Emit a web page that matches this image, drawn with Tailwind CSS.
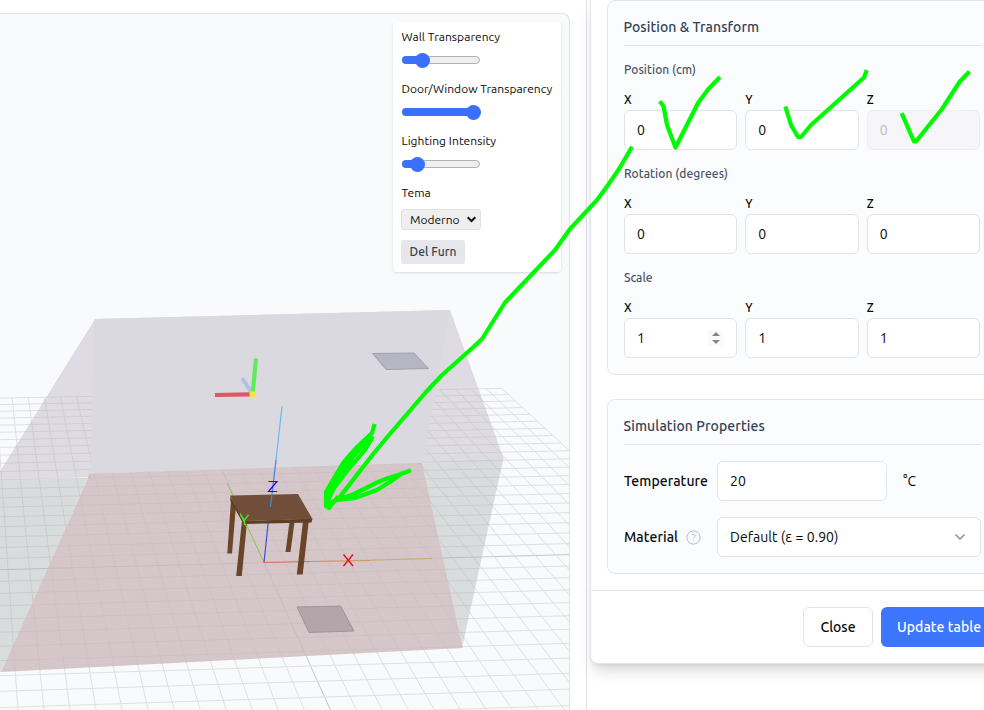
<!DOCTYPE html>
<html lang="en">
<head>
<meta charset="utf-8">
<title>Room editor</title>
<script src="https://cdn.jsdelivr.net/npm/@tailwindcss/browser@4"></script>
</head>
<body class="bg-white overflow-hidden font-[Ubuntu,'Noto_Sans','Open_Sans',sans-serif] text-sm text-[#0a0a0a]">
<div class="relative flex w-[984px] h-[710px] overflow-hidden">

  <!-- 3D viewer -->
  <section class="w-[570px] shrink-0 pt-[13px] h-full">
    <div class="relative h-[697px] bg-[#f9fafc] border-t border-r border-[#e2e3e6] rounded-tr-lg overflow-hidden flex justify-end items-start pt-2 pr-2">
      <svg class="absolute left-0 top-[-14px]" width="569" height="710" viewBox="0 0 569 710">
        <g id="grid" fill="none" stroke="#dfe0e1" stroke-width="1"></g>
        <polygon points="95,319 450,310 503.500,458 422,463.500 90,473 90,477 -6,481" fill="#bcb5c6" fill-opacity=".45"/>
        <polygon points="-6,481 90,478 90,473 2,672 0,672" fill="#aeb2b0" fill-opacity=".42"/>
        <polygon points="422,463.500 503.500,458 462,648" fill="#aeb2b0" fill-opacity=".42"/>
        <polygon points="94.500,319 450,310 436,388 422,463.500 90,473.500 92,396" fill="#dad9e0"/>
        <polygon points="90,473.500 422,463 462.500,648 1.500,672" fill="#cbb9ba" fill-opacity=".78"/>
        <!-- ceiling and floor openings -->
        <polygon points="372.500,353.500 414,353 428.500,368.500 386,369.500" fill="#b4b7c2" stroke="#9da2af"/>
        <polygon points="297,607 340.500,606 354,631 309,632.500" fill="#b3a5aa" stroke="#9d959e"/>
        <!-- view gizmo -->
        <path d="M252 393L243 379.500" stroke="#b4c0e3" stroke-width="4" stroke-linecap="round"/>
        <path d="M215 395L250 394.300" stroke="#e3555f" stroke-width="4.200"/>
        <path d="M252.800 392L256 358.500" stroke="#5fec5c" stroke-width="4.200"/>
        <rect x="249.500" y="391.500" width="6" height="5.500" rx="1" fill="#eeea3c"/>
        <!-- axes behind the table -->
        <path d="M227.500 484L264 562.500" stroke="#8bc94a"/>
        <path d="M264 562.500L269 515" stroke="#4448e8" stroke-width="1.200"/>
        <path d="M264 562.500L310 561.500" stroke="#dc7050"/>
        <path d="M310 561.500L370 560.500" stroke="#d39552"/>
        <path d="M370 560.300L432 558.500" stroke="#cfae64"/>
        <!-- table -->
        <g fill="#6a4528">
          <polygon points="231,500 235.800,508 232,553.500 227.300,553.500"/>
          <polygon points="289.500,522 294.500,522 290.500,552 285.500,552"/>
          <polygon points="241.800,522 247,522 241.800,576 236.200,576"/>
          <polygon points="303,521 308.800,521 302.700,574.500 296.800,574.500"/>
          <polygon points="230,496 245,521 312.500,518.500 311.500,522.500 243.500,524 230.500,501" fill="#5f3e24"/>
        </g>
        <polygon points="230,495.500 298,494 312.500,519 243.500,521" fill="#704e3a"/>
        <path d="M240 513L247 528" stroke="#8bc94a"/>
        <path d="M282 406.500L276 460" stroke="#5fbdea" stroke-width="1.200"/>
        <path d="M276 460L270.500 507" stroke="#3c86de" stroke-width="1.200"/>
        <!-- stroked axis markers -->
        <path d="M268.500 481.500H277L268.500 491.500H277" fill="none" stroke="#3000e0" stroke-width="1.200"/>
        <path d="M240.500 515L244.500 520L248.500 515M244.500 520V525" fill="none" stroke="#3af01a" stroke-width="1.300"/>
        <path d="M343.500 554.500L353 566M353 554.500L343.500 566" stroke="#f5051c" stroke-width="1.300"/>
      </svg>

      <div class="relative w-[168px] h-[250px] bg-white rounded shadow-sm pl-[8.500px] pt-2 text-xs flex flex-col items-start">
        <label class="-mt-px h-4 leading-4 whitespace-nowrap tracking-[0.05px]">Wall Transparency</label>
        <div class="relative mt-[11px] w-[78px] h-2 rounded-full bg-[#efefef] border border-[#b2b2b2]"><i class="absolute -left-px -top-px h-2 w-5 rounded-l-full bg-[#3b73f6]"></i><i class="absolute left-3 -top-[4.500px] size-[15px] rounded-full bg-[#3b6fff]"></i></div>
        <label class="mt-[17px] h-4 leading-4 whitespace-nowrap tracking-[0.02px]">Door/Window Transparency</label>
        <div class="relative mt-[11px] w-[78px] h-2 rounded-full bg-[#3b6fff]"><i class="absolute left-16 -top-[3.500px] size-[15px] rounded-full bg-[#3b6fff]"></i></div>
        <label class="mt-[17px] h-4 leading-4 whitespace-nowrap tracking-[0.05px]">Lighting Intensity</label>
        <div class="relative mt-[11px] w-[78px] h-2 rounded-full bg-[#efefef] border border-[#b2b2b2]"><i class="absolute -left-px -top-px h-2 w-4 rounded-l-full bg-[#3b73f6]"></i><i class="absolute left-[7px] -top-[4.500px] size-[15px] rounded-full bg-[#3b6fff]"></i></div>
        <label class="mt-[17px] h-4 leading-4">Tema</label>
        <div class="mt-2 -ml-[0.500px] w-20 h-[21px] rounded-[3px] bg-[#efefef] border border-[#e0e1e4] flex items-center justify-between pl-2 pr-1"><span>Moderno</span><svg width="9" height="7" viewBox="0 0 9 7" fill="none" stroke="#111" stroke-width="2"><path d="M.7 1.200L4.500 5L8.300 1.200"/></svg></div>
        <button class="mt-[10px] -ml-[0.500px] h-6 w-16 rounded-[3px] bg-[#e5e7eb] text-[#364153] font-medium whitespace-nowrap tracking-[0.05px]">Del Furn</button>
      </div>
    </div>
  </section>

  <!-- Properties dialog -->
  <section class="ml-4 w-[500px] shrink-0 border-l border-[#e2e3e6] pl-[3px] h-full">
    <div class="h-[664px] w-[424px] bg-white border border-t-0 border-[#e2e4e8] rounded-b-lg shadow-[0_10px_15px_-3px_rgba(0,0,0,0.14),0_4px_6px_-4px_rgba(0,0,0,0.12)]">
      <div class="pl-4">
        <div class="h-[375px] w-[391px] rounded-lg border border-[#e5e5e5] bg-[#fbfcfe] px-4">
          <h2 class="-ml-[0.500px] h-[45px] w-[357px] pt-4 leading-5 border-b border-[#e5e5e5] text-[#364153] font-medium tracking-[0.07px]">Position &amp; Transform</h2>
          <h3 class="mt-4 h-4 leading-4 text-xs font-medium text-[#4a5565] tracking-[0.05px]">Position (cm)</h3>
          <div class="mt-[14px] w-[356px] grid grid-cols-3 gap-2 text-xs font-medium">
            <label>X<span class="mt-0.5 h-10 flex items-center border border-[#e3e3e3] rounded-md bg-white px-3 text-sm font-normal">0</span></label>
            <label>Y<span class="mt-0.5 h-10 flex items-center border border-[#e3e3e3] rounded-md bg-white px-3 text-sm font-normal">0</span></label>
            <label>Z<span class="mt-0.5 h-10 flex items-center border border-[#efeff0] rounded-md bg-[#f6f6f8] px-3 text-sm font-normal text-[#b9babd]">0</span></label>
          </div>
          <h3 class="mt-4 h-4 leading-4 text-xs font-medium text-[#4a5565] tracking-[0.08px]">Rotation (degrees)</h3>
          <div class="mt-[14px] w-[356px] grid grid-cols-3 gap-2 text-xs font-medium">
            <label>X<span class="mt-0.5 h-10 flex items-center border border-[#e3e3e3] rounded-md bg-white px-3 text-sm font-normal">0</span></label>
            <label>Y<span class="mt-0.5 h-10 flex items-center border border-[#e3e3e3] rounded-md bg-white px-3 text-sm font-normal">0</span></label>
            <label>Z<span class="mt-0.5 h-10 flex items-center border border-[#e3e3e3] rounded-md bg-white px-3 text-sm font-normal">0</span></label>
          </div>
          <h3 class="mt-4 h-4 leading-4 text-xs font-medium text-[#4a5565]">Scale</h3>
          <div class="mt-[14px] w-[356px] grid grid-cols-3 gap-2 text-xs font-medium">
            <label>X<span class="mt-0.5 h-10 flex items-center justify-between border border-[#e3e3e3] rounded-md bg-white pl-3 pr-[13px] text-sm font-normal">1<span class="bg-[#fafafa] w-[15px] h-4 flex items-center justify-center"><svg width="8" height="12" viewBox="0 0 8 12" fill="#858585"><path d="M0 4L4 0L8 4ZM0 8H8L4 12Z"/></svg></span></span></label>
            <label>Y<span class="mt-0.5 h-10 flex items-center border border-[#e3e3e3] rounded-md bg-white px-3 text-sm font-normal">1</span></label>
            <label>Z<span class="mt-0.5 h-10 flex items-center border border-[#e3e3e3] rounded-md bg-white px-3 text-sm font-normal">1</span></label>
          </div>
        </div>
        <div class="mt-6 h-[175px] w-[391px] rounded-lg border border-[#e5e5e5] bg-[#fbfcfe] px-4">
          <h2 class="-ml-[0.500px] h-[45px] w-[357px] pt-4 leading-5 border-b border-[#e2e8f0] text-[#364153] font-medium tracking-[0.1px]">Simulation Properties</h2>
          <div class="mt-4 h-10 flex items-center">
            <span class="w-[93px] font-medium whitespace-nowrap tracking-[0.06px]">Temperature</span>
            <span class="w-[170px] h-10 flex items-center border border-[#e3e3e3] rounded-md bg-white px-3">20</span>
            <span class="ml-4">°C</span>
          </div>
          <div class="mt-4 h-10 flex items-center">
            <span class="w-[93px] flex items-center gap-2 font-medium tracking-[0.06px]">Material
              <svg width="15" height="15" viewBox="0 0 15 15" fill="none" stroke="#b7bac0"><circle cx="7.500" cy="7.500" r="6.600"/><path d="M5.500 5.400C5.800 4 9.400 4.100 9.400 5.900C9.400 7.200 7.500 7.200 7.500 8.300M7.500 9.900V10.700" stroke-width="1"/></svg></span>
            <span class="w-[264px] h-10 flex items-center justify-between border border-[#e3e3e3] rounded-md bg-white pl-3 pr-[15px] tracking-[0.04px]">Default (ε = 0.90)
              <svg width="10" height="6" viewBox="0 0 10 6" fill="none" stroke="#858585" stroke-width="1.300"><path d="M.5 .500L5 5L9.500 .500"/></svg></span>
          </div>
        </div>
      </div>
      <div class="mt-4 border-t border-[#e5e5e5] pt-4 pr-[15px] flex gap-2 justify-end font-medium">
        <button class="w-[70px] h-10 border border-[#e3e3e3] rounded-md">Close</button>
        <button class="w-[117px] h-10 rounded-md bg-[#3c76ff] text-white pl-4 text-left whitespace-nowrap tracking-[0.06px]">Update table</button>
      </div>
    </div>
  </section>

  <!-- hand-drawn annotations -->
  <svg class="absolute inset-0 pointer-events-none" width="984" height="710" viewBox="0 0 984 710" fill="none" stroke="#00fb00" stroke-width="4.200" stroke-linejoin="round" stroke-linecap="square">
    <path d="M661 103L663.500 106L667 125L675.500 147.500L698 103L708 89.500L718.500 78.500"/>
    <path d="M786 108.500L791 125L798 137L801 137L811 125L864 77.500L866 72"/>
    <path d="M902.500 115L914 141.500L916 141.500L942 109L959.500 82L968 73"/>
    <path d="M631 148.500L619 169L608 185L597 200L570 229L555 250L505 302.500L482 339L469 351L442 375L426 392L389 435L374 453L339 498"/>
    <path d="M374 426L372 433L357 447L343 463L330 485L326 492L326 506L329 508L337 498M372 438L365 450L347 471L334 488L328 500M368 440L352 458L337 476L328 490" />
    <path d="M345 466L329 488V497L340 481L355 462L350 458Z" fill="#00fb00" stroke-width="2"/>
    <path d="M409 471L401 474L388 478L376 483L354 494L340 499L329 503M401 474L390 482L377 490L355 498L338 500"/>
  </svg>
</div>

<script>
  // Ground grid: fit a plane-to-view projection from anchor points, then draw 41 x 41 lines.
  const anchors = [[-11,-20,11.7,398.1],[0,-20,189,394.4],[20,-20,501.3,388.2],[20,-11,569.5,450.8],
                   [0,0,264,562.5],[0,10,324.4,697.8],[-12,10,17.8,706.3]];
  const A = Array.from({length: 8}, () => Array(9).fill(0));
  for (const [u, v, x, y] of anchors) {
    for (const r of [[u,v,1,0,0,0,-u*x,-v*x,x],[0,0,0,u,v,1,-u*y,-v*y,y]])
      for (let i = 0; i < 8; i++) for (let j = 0; j < 9; j++) A[i][j] += r[i] * r[j];
  }
  for (let c = 0; c < 8; c++) {
    let p = c;
    for (let i = c + 1; i < 8; i++) if (Math.abs(A[i][c]) > Math.abs(A[p][c])) p = i;
    [A[c], A[p]] = [A[p], A[c]];
    for (let i = 0; i < 8; i++) if (i !== c) {
      const f = A[i][c] / A[c][c];
      for (let j = c; j < 9; j++) A[i][j] -= f * A[c][j];
    }
  }
  const h = A.map((r, i) => r[8] / r[i]);
  const pt = (u, v) => {
    const w = h[6]*u + h[7]*v + 1;
    return ((h[0]*u + h[1]*v + h[2]) / w).toFixed(1) + ' ' + ((h[3]*u + h[4]*v + h[5]) / w).toFixed(1);
  };
  let s = '';
  for (let i = -20; i <= 20; i++) {
    const c = i === 0 ? ' stroke="#c4c5c6"' : '';
    s += `<path${c} d="M${pt(i,-20)}L${pt(i,14)}"/><path${c} d="M${pt(-20,i)}L${pt(20,i)}"/>`;
  }
  document.getElementById('grid').innerHTML = s;
</script>
</body>
</html>
